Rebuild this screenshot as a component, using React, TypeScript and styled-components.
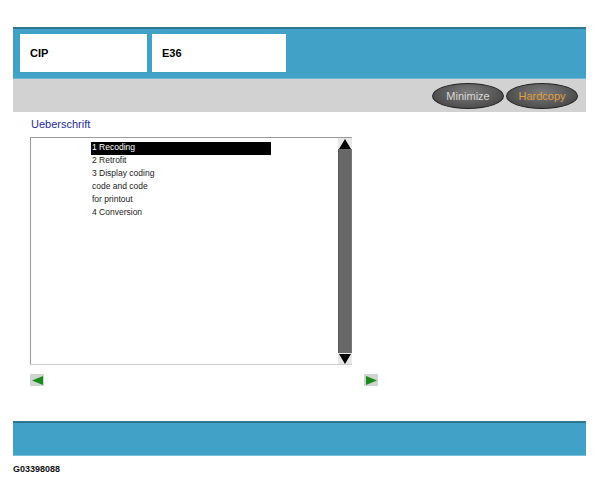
import React from 'react';
import styled, { createGlobalStyle } from 'styled-components';

const GlobalStyle = createGlobalStyle`
  body {
    margin: 0;
    background: #fff;
    font-family: "Liberation Sans", Arial, sans-serif;
  }
`;

const Page = styled.div`
  width: 600px;
  height: 500px;
  padding-top: 27px;
  box-sizing: border-box;
`;

const Frame = styled.div`
  width: 573px;
  margin-left: 13px;
`;

const TitleBar = styled.div`
  height: 52px;
  box-sizing: border-box;
  background: #42a1c6;
  border-top: 2px solid #2f7690;
  border-bottom: 1px solid #6fb6d2;
  display: flex;
  gap: 5px;
  padding: 5px 0 0 7px;
`;

const TitleBox = styled.div<{ $w: number }>`
  width: ${(p) => p.$w}px;
  height: 38px;
  background: #fff;
  display: flex;
  align-items: center;
  padding-left: 10px;
  box-sizing: border-box;
  font-size: 11px;
  font-weight: bold;
  color: #000;
`;

const ToolBar = styled.div`
  height: 33px;
  background: #d2d2d2;
  display: flex;
  justify-content: flex-end;
  align-items: center;
  gap: 2px;
  padding-right: 8px;
`;

const PillButton = styled.button<{ $accent?: boolean }>`
  width: 72px;
  height: 26px;
  border-radius: 50%;
  border: 1px solid #222;
  background: radial-gradient(ellipse at 50% 35%, #7a7a7a 0%, #555 60%, #3c3c3c 100%);
  color: ${(p) => (p.$accent ? '#e0a040' : '#d8d8d8')};
  font-family: "Liberation Sans", Arial, sans-serif;
  font-size: 11px;
  padding: 0;
  cursor: pointer;
`;

const Content = styled.div`
  padding-left: 30px;
`;

const Heading = styled.div`
  margin: 6px 0 0 1px;
  height: 19px;
  font-size: 11px;
  color: #1d2a9e;
`;

const ListBox = styled.div`
  width: 322px;
  height: 228px;
  box-sizing: border-box;
  border-top: 1px solid #9a9a9a;
  border-left: 1px solid #9a9a9a;
  border-bottom: 1px solid #cfcfcf;
  display: flex;
`;

const Items = styled.div`
  flex: 1;
  padding: 4px 0 0 60px;
`;

const Item = styled.div<{ $selected?: boolean }>`
  width: 180px;
  height: 13px;
  line-height: 11px;
  box-sizing: border-box;
  padding-left: 1px;
  font-size: 8.5px;
  color: ${(p) => (p.$selected ? '#fff' : '#222')};
  background: ${(p) => (p.$selected ? '#000' : 'transparent')};
`;

const ScrollBar = styled.div`
  width: 14px;
  display: flex;
  flex-direction: column;
`;

const ScrollTrack = styled.div`
  flex: 1;
  background: #686868;
  border-left: 1px solid #555;
  border-right: 1px solid #777;
`;

const ScrollArrow = styled.div`
  height: 11px;
  display: flex;
  align-items: center;
  justify-content: center;
  background: #e8e8e8;
`;

const NavRow = styled.div`
  width: 348px;
  margin-top: 9px;
  display: flex;
  justify-content: space-between;
`;

const NavButton = styled.div`
  width: 14px;
  height: 12px;
  background: #cfd6cf;
  display: flex;
  align-items: center;
  justify-content: center;
`;

const FooterBar = styled.div`
  width: 573px;
  height: 35px;
  margin: 35px 0 0 13px;
  box-sizing: border-box;
  background: #42a1c6;
  border-top: 2px solid #2f7690;
  border-bottom: 1px solid #7cc0da;
`;

const Code = styled.div`
  margin: 8px 0 0 13px;
  font-size: 9px;
  font-weight: bold;
  color: #111;
`;

const Triangle = ({ dir, color, w, h }: { dir: 'up' | 'down' | 'left' | 'right'; color: string; w: number; h: number }) => {
  const pts = {
    up: `0,${h} ${w / 2},0 ${w},${h}`,
    down: `0,0 ${w},0 ${w / 2},${h}`,
    left: `${w},0 ${w},${h} 0,${h / 2}`,
    right: `0,0 ${w},${h / 2} 0,${h}`,
  }[dir];
  return (
    <svg width={w} height={h} viewBox={`0 0 ${w} ${h}`}>
      <polygon points={pts} fill={color} />
    </svg>
  );
};

const items = ['1 Recoding', '2 Retrofit', '3 Display coding', 'code and code', 'for printout', '4 Conversion'];

const App: React.FC = () => {
  return (
    <Page>
      <GlobalStyle />
      <Frame>
        <TitleBar>
          <TitleBox $w={127}>CIP</TitleBox>
          <TitleBox $w={134}>E36</TitleBox>
        </TitleBar>
        <ToolBar>
          <PillButton>Minimize</PillButton>
          <PillButton $accent>Hardcopy</PillButton>
        </ToolBar>
      </Frame>
      <Content>
        <Heading>Ueberschrift</Heading>
        <ListBox>
          <Items>
            {items.map((t, i) => (
              <Item key={t} $selected={i === 0}>
                {t}
              </Item>
            ))}
          </Items>
          <ScrollBar>
            <ScrollArrow>
              <Triangle dir="up" color="#000" w={12} h={10} />
            </ScrollArrow>
            <ScrollTrack />
            <ScrollArrow>
              <Triangle dir="down" color="#000" w={12} h={10} />
            </ScrollArrow>
          </ScrollBar>
        </ListBox>
        <NavRow>
          <NavButton>
            <Triangle dir="left" color="#1c8a1c" w={11} h={9} />
          </NavButton>
          <NavButton>
            <Triangle dir="right" color="#1c8a1c" w={11} h={9} />
          </NavButton>
        </NavRow>
      </Content>
      <FooterBar />
      <Code>G03398088</Code>
    </Page>
  );
};

export default App;
